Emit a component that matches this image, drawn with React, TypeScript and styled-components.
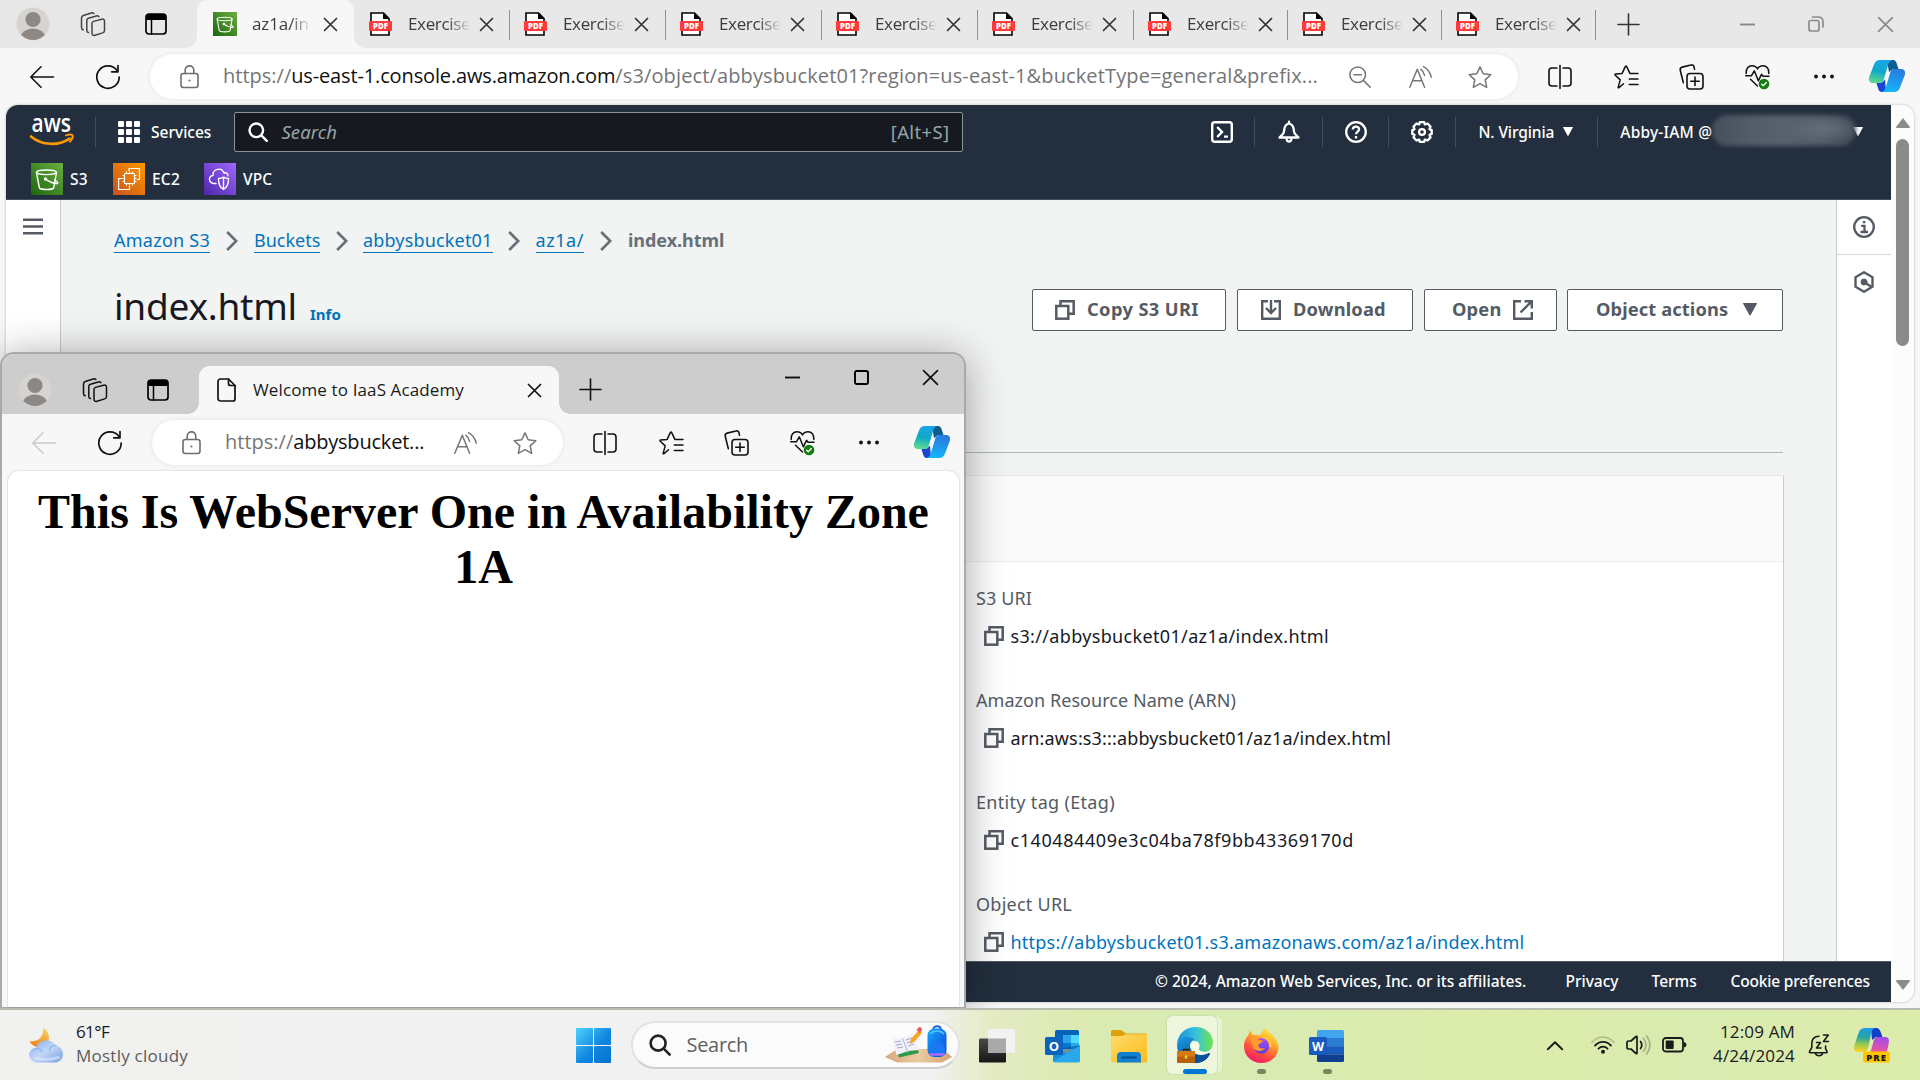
import React from "react";
import styled, { createGlobalStyle, css } from "styled-components";

const segoe = `"Open Sans", "Noto Sans", sans-serif`;
const ember = `"Noto Sans", "Open Sans", sans-serif`;

const Global = createGlobalStyle`
  *, *::before, *::after { box-sizing: border-box; }
  body { margin: 0; width: 1920px; height: 1080px; overflow: hidden; background: #f7f7f7; }
  svg { display: block; flex: none; overflow: visible; }
`;

/* ---------- shared ---------- */
const row = css`
  display: flex;
  align-items: center;
`;
type Spaced = { $ls?: number };
const spaced = css<Spaced>`
  white-space: nowrap;
  letter-spacing: ${(p) => p.$ls ?? 0}px;
`;
const Slot = styled.div<{ $w: number }>`
  ${row};
  justify-content: center;
  flex: none;
  width: ${(p) => p.$w}px;
  height: 100%;
`;

/* ---------- icons ---------- */
type Ic = { c?: string; s?: number };
const line = (c: string, w: number) => ({ fill: "none", stroke: c, strokeWidth: w, strokeLinecap: "round" as const, strokeLinejoin: "round" as const });

const Avatar = () => (
  <svg width="34" height="34" viewBox="0 0 34 34">
    <clipPath id="av"><circle cx="17" cy="17" r="16" /></clipPath>
    <circle cx="17" cy="17" r="16.5" fill="#d6d4d1" />
    <g clipPath="url(#av)" fill="#8d8884"><circle cx="17" cy="12.5" r="7.6" /><ellipse cx="17" cy="31" rx="12.4" ry="9.4" /></g>
  </svg>
);
const Workspaces = ({ c = "#222" }: Ic) => (
  <svg width="26" height="26" viewBox="0 0 26 26" {...line(c, 1.5)}>
    <path d="M13.5 10.4 21.7 8.200c1.500-.4 2.800.4 2.800 2v9.300c0 1.200-.7 2-1.800 2.400l-7.700 2.400c-1.600.5-3-.4-3-2V12.500c0-1.100.5-1.800 1.500-2.100z" />
    <path d="M8.500 21.500c-1-.2-1.700-1-1.700-2.100V9.600c0-1.300.6-2 1.700-2.300l7.800-2.300c1-.3 1.900-.1 2.500.6" />
    <path d="M3.300 18.700c-1.200-.2-1.800-1-1.800-2.200V7c0-1.300.6-2.100 1.800-2.500l8-2.500c1-.3 1.900-.1 2.500.5" />
  </svg>
);
const TabActions = () => (
  <svg width="22" height="22" viewBox="0 0 22 22">
    <rect x="1" y="1" width="20" height="20" rx="3" {...line("#000", 1.7)} />
    <path d="M1 7V4a3 3 0 0 1 3-3h14a3 3 0 0 1 3 3v3z" fill="#000" />
    <path d="M6.500 7v14" {...line("#000", 1.5)} />
  </svg>
);
const Cross = ({ c = "#333", s = 13 }: Ic) => (
  <svg width={s} height={s} viewBox="0 0 13 13" {...line(c, (1.7 * 13) / s)}><path d="m.5.5 12 12m0-12-12 12" /></svg>
);
const Plus = ({ c = "#333", s = 21 }: Ic) => (
  <svg width={s} height={s} viewBox="0 0 21 21" {...line(c, 1.6)}><path d="M10.500 0v21M0 10.500h21" /></svg>
);
const Minimize = ({ c = "#888" }: Ic) => (
  <svg width="15" height="15" viewBox="0 0 15 15" {...line(c, 1.9)} strokeLinecap="butt"><path d="M0 7.500h15" /></svg>
);
const Restore = () => (
  <svg width="16" height="16" viewBox="0 0 16 16" {...line("#8a8a8a", 1.7)}>
    <rect x="1" y="4.500" width="10" height="10.500" rx="2" /><path d="M4.500 1H10c3 0 5 2 5 5v5" />
  </svg>
);
const Maximize = () => (
  <svg width="15" height="15" viewBox="0 0 15 15" {...line("#000", 1.9)}><rect x="1" y="1" width="13" height="13" rx="1.800" /></svg>
);
const Back = ({ c = "#111" }: Ic) => (
  <svg width="24" height="22" viewBox="0 0 24 22" {...line(c, 1.6)}><path d="M23.500 11H1M11 .8.8 11 11 21.200" /></svg>
);
const Refresh = () => (
  <svg width="24" height="24" viewBox="0 0 24 24" {...line("#111", 1.7)}><path d="M21 5.400A11.200 11.200 0 1 0 23.200 12" /><path d="M22 .6V6.800h-6.300" /></svg>
);
const Lock = () => (
  <svg width="19" height="24" viewBox="0 0 19 24" {...line("#6e6e6e", 1.6)}>
    <rect x="1" y="8.500" width="17" height="14" rx="2.400" /><path d="M5.200 8.500V5.200a4.300 4.300 0 0 1 8.600 0v3.300" /><circle cx="9.500" cy="15.500" r="1.100" fill="#6e6e6e" stroke="none" />
  </svg>
);
const ZoomOut = () => (
  <svg width="22" height="22" viewBox="0 0 22 22" {...line("#767676", 1.5)}><circle cx="8.700" cy="8.700" r="7.800" /><path d="m14.400 14.400 6.800 6.800M5 8.700h7.400" /></svg>
);
const ReadAloud = () => (
  <svg width="23" height="22" viewBox="0 0 23 22" {...line("#767676", 1.5)}>
    <path d="m.8 21.200 7.500-18 7.300 18M3.400 14.800h9.800" /><path d="M11.800 3.300c2 1.300 3.300 3.300 3.800 6M14.500.6c3.800 2 6.600 5.300 7.700 10.600" />
  </svg>
);
const Star = () => (
  <svg width="24" height="24" viewBox="0 0 24 24" {...line("#767676", 1.5)}>
    <path d="m12 1.300 3.200 6.900 7.600.9-5.600 5.200 1.500 7.500L12 18.100l-6.700 3.700 1.500-7.500L1.200 9.100l7.600-.9z" transform="translate(0 .6)" />
  </svg>
);
const Split = () => (
  <svg width="24" height="24" viewBox="0 0 24 24" {...line("#111", 1.6)}>
    <path d="M9 3H4a3 3 0 0 0-3 3v12a3 3 0 0 0 3 3h5M15 3h5a3 3 0 0 1 3 3v12a3 3 0 0 1-3 3h-5M12 .5v23" />
  </svg>
);
const Favorites = () => (
  <svg width="25" height="24" viewBox="0 0 25 24" {...line("#111", 1.5)}>
    <path d="M9.500 18.800 5 22.600c-.6.500-1 .2-.8-.5l2-7.200L1.300 10.300c-.6-.6-.4-1.100.4-1.200l6.400-.7L11.300 1.600c.4-.8 1-.8 1.400 0l3.200 6.800" />
    <path d="M16.500 8.400H24M15.300 14H24M15.300 19.500H24" />
  </svg>
);
const Collections = () => (
  <svg width="25" height="26" viewBox="0 0 25 26" {...line("#111", 1.6)}>
    <rect x="8" y="9.500" width="16" height="15.500" rx="3" /><path d="M16 13v8.500M11.700 17.300h8.600" />
    <path d="M4.300 18.600 1.300 6.500C.9 4.800 1.600 3.600 3.200 3.100L12 1c1.500-.4 2.700.3 3 1.800l.5 2.400" />
  </svg>
);
const Heart = () => (
  <svg width="26" height="26" viewBox="0 0 26 26">
    <g {...line("#111", 1.5)}>
      <path d="M1.200 9.500C.6 4.500 3.600 1.800 7 1.800c2.500 0 4.500 1.200 5.500 3.200 1-2 3-3.200 5.500-3.200 3.400 0 6.400 2.700 5.800 7.700" />
      <path d="M.7 11.800h5.600l3-5 4 10 3.200-6.500 1.500 2h6" /><path d="m5.500 15.300 7 6.700" />
    </g>
    <circle cx="19" cy="20" r="5.300" fill="#107c10" /><path d="m16.700 20.200 1.600 1.600 3-3.200" {...line("#fff", 1.4)} />
  </svg>
);
const Dots = () => (
  <svg width="20" height="5" viewBox="0 0 20 5" fill="#111"><circle cx="2" cy="2.500" r="1.900" /><circle cx="10" cy="2.500" r="1.900" /><circle cx="18" cy="2.500" r="1.900" /></svg>
);
const Copilot = () => (
  <svg width="36" height="32" viewBox="0 0 36 32">
    <defs>
      <linearGradient id="cpa" x1=".5" y1="0" x2=".3" y2="1"><stop offset="0" stopColor="#18a6e8" /><stop offset=".5" stopColor="#10a9c8" /><stop offset="1" stopColor="#5fdc8a" /></linearGradient>
      <linearGradient id="cpb" x1=".7" y1="0" x2=".4" y2="1"><stop offset="0" stopColor="#2a78dc" /><stop offset="1" stopColor="#12b6fb" /></linearGradient>
    </defs>
    <path d="M18 0h6c2.400 0 3.200 1.600 4 4.500L29.500 9H24l-4 3z" fill="#0b5c8f" />
    <path d="M17 32h-4c-2.400 0-3.200-1.400-4-4L7.300 22.500H13l3-3z" fill="#1a44d6" />
    <path d="M11 0h13c-3 0-4.300 2.500-5.200 6L15 18.500c-1 3.500-2 4.500-5 4.500H4c-3 0-4.800-2-3.800-6L5 4.500C6.200 1.200 8 0 11 0z" fill="url(#cpa)" />
    <path d="M25 32H12c3 0 4.300-2.500 5.200-6L21 13.500c1-3.500 2-4.500 5-4.500h6c3 0 4.800 2 3.800 6L31 27.500c-1.200 3.300-3 4.500-6 4.500z" fill="url(#cpb)" />
  </svg>
);
const Bucket = ({ s = 32 }: Ic) => (
  <svg width={s} height={s} viewBox="0 0 32 32">
    <defs><linearGradient id="s3g" x1="0" y1="1" x2="1" y2="0"><stop stopColor="#1b660f" /><stop offset="1" stopColor="#6cae3e" /></linearGradient></defs>
    <rect width="32" height="32" fill="url(#s3g)" />
    <g {...line("#fff", 1.4)}>
      <ellipse cx="15.500" cy="9.300" rx="10" ry="2.300" /><path d="M5.500 9.500 8.300 24.500c.5 2.700 14 2.700 14.500 0L25.500 9.500" /><path d="M14.500 16c3 2.500 10 5.300 12 4.500 1.300-.7-1.300-2.400-2.800-3.300" /><circle cx="14.500" cy="16" r="1" />
    </g>
  </svg>
);
const Ec2 = () => (
  <svg width="32" height="32" viewBox="0 0 32 32">
    <defs><linearGradient id="ecg" x1="0" y1="1" x2="1" y2="0"><stop stopColor="#c8511b" /><stop offset="1" stopColor="#ff9900" /></linearGradient></defs>
    <rect width="32" height="32" fill="url(#ecg)" />
    <g {...line("#fff", 1.200)} strokeLinecap="butt">
      <rect x="11.500" y="10.500" width="10" height="10" rx="1" />
      <path d="M13.500 8.500v2M16.500 8.500v2M19.500 8.500v2M13.500 20.500v2M16.500 20.500v2M19.500 20.500v2M9.500 12.500h2M9.500 15.500h2M9.500 18.500h2M21.500 12.500h2M21.500 15.500h2M21.500 18.500h2" />
      <path d="M9 15.500H5.600V26.500H16.500V23M16 8V5.500H26.500V16.500H24" />
    </g>
  </svg>
);
const Vpc = () => (
  <svg width="32" height="32" viewBox="0 0 32 32">
    <defs><linearGradient id="vpg" x1="0" y1="1" x2="1" y2="0"><stop stopColor="#4d27a8" /><stop offset="1" stopColor="#a166ff" /></linearGradient></defs>
    <rect width="32" height="32" fill="url(#vpg)" />
    <g {...line("#fff", 1.400)}>
      <path d="M12 20.500H9.500C4 19.500 4.500 13 9 12.500 8.500 6 17.500 3.500 20 10c2.300-1 4 .6 4 2.800" />
      <path d="M19.500 14.200c1.700 1 3.400 1.300 5 1.300 0 6-1.200 9-5 11-3.800-2-5-5-5-11 1.600 0 3.300-.3 5-1.300zM19.500 14.500v12" />
    </g>
  </svg>
);
const Pdf = () => (
  <svg width="23" height="24" viewBox="0 0 23 24">
    <path d="M2 1h12.500L20 6.500V23H2z" fill="#fff" stroke="#000" strokeWidth="1.600" /><path d="M14 1v6h6z" fill="#000" />
    <rect x="0" y="9" width="23" height="10" rx="1" fill="#ff3b3b" />
    <text x="11.500" y="16.900" textAnchor="middle" fontFamily="Open Sans, sans-serif" fontWeight="800" fontSize="7.800" fill="#fff">PDF</text>
  </svg>
);
const Page = () => (
  <svg width="19" height="24" viewBox="0 0 19 24" {...line("#111", 1.700)}><path d="M3.500 1h8L18 7.500V21a2 2 0 0 1-2 2H3.500a2.500 2.500 0 0 1-2.500-2V3.500A2.500 2.500 0 0 1 3.500 1z" /><path d="M11.500 1v4.500a2 2 0 0 0 2 2H18" /></svg>
);
const AwsLogo = () => (
  <svg width="44" height="30" viewBox="0 0 44 30">
    <text x="1.500" y="14.500" textLength="39.500" lengthAdjust="spacingAndGlyphs" fontFamily="Open Sans, sans-serif" fontWeight="600" fontSize="25" fill="#fff">aws</text>
    <g {...line("#f90", 2.600)}><path d="M1 19.500C12 28.800 29 29 39.500 21.600" /><path d="M36 18.400c3-1 6-.9 6.500-.2.600.9-.4 4-2.500 6.500" strokeWidth="1.900" /></g>
  </svg>
);
const Grid9 = () => (
  <svg width="22" height="22" viewBox="0 0 22 22" fill="#fff">
    {[0, 8, 16].map((y) => [0, 8, 16].map((x) => <rect key={`${x}-${y}`} x={x} y={y} width="6" height="6" rx="1.300" />))}
  </svg>
);
const Magnifier = ({ c = "#fff", s = 20 }: Ic) => (
  <svg width={s} height={s} viewBox="0 0 20 20" {...line(c, 2.400)}><circle cx="8.300" cy="8.300" r="6.800" /><path d="m13.300 13.300 5.500 5.500" /></svg>
);
const Shell = () => (
  <svg width="22" height="22" viewBox="0 0 22 22" {...line("#fff", 2.400)}><rect x="1.200" y="1.200" width="19.600" height="19.600" rx="2.500" /><path d="m6.200 6 4.800 5-4.800 5M13 15.600h4" strokeLinecap="butt" strokeLinejoin="miter" /></svg>
);
const Bell = () => (
  <svg width="22" height="22" viewBox="0 0 22 22" {...line("#fff", 2.300)}><path d="M11 2.500c-4 1-4.800 4-4.900 7.500C6 13 4 13.500 1.500 16.500h19C18 13.500 16 13 15.900 10 15.800 6.500 15 3.500 11 2.500zM11 .6v2M8.700 18.500c.5 2.700 4.100 2.700 4.600 0" /></svg>
);
const Help = () => (
  <svg width="22" height="22" viewBox="0 0 22 22" {...line("#fff", 2.300)}><circle cx="11" cy="11" r="9.800" /><path d="M7.800 8.500C8 4.500 14.200 4.800 14.100 8.500c-.1 2.100-3.100 2.300-3.100 4.800" strokeLinecap="butt" /><path d="M11 15v2.400" strokeLinecap="butt" /></svg>
);
const Gear = () => (
  <svg width="22" height="22" viewBox="0 0 22 22" {...line("#fff", 2.300)}>
    <path d="m8.800 1.200h4.400l.6 2.200 2.700-.9 3 3.100-1 2.500 2.200 1v3.800l-2.200 1 1 2.500-3 3.100-2.700-.9-.6 2.200H8.800l-.6-2.200-2.700.9-3-3.100 1-2.500-2.200-1V9.100l2.200-1-1-2.500 3-3.100 2.700.9z" /><circle cx="11" cy="11" r="2.900" />
  </svg>
);
const Caret = ({ c = "#fff", s = 10 }: Ic) => (
  <svg width={s} height={s * 0.9} viewBox="0 0 10 9" fill={c}><path d="M.3 0h9.400c.3 0 .4.300.2.600L5.500 8.600c-.2.400-.8.400-1 0L.1.600C-.1.300 0 0 .3 0z" /></svg>
);
const Menu = () => (
  <svg width="20" height="17" viewBox="0 0 20 17" stroke="#545b64" strokeWidth="2.600"><path d="M0 1.700h20M0 8.500h20M0 15.300h20" /></svg>
);
const Chevron = () => (
  <svg width="12" height="20" viewBox="0 0 12 20" fill="none" stroke="#687078" strokeWidth="2.600"><path d="m1.200 1 9 9-9 9" /></svg>
);
const Copy = () => (
  <svg width="20" height="20" viewBox="0 0 20 20" fill="none" stroke="#545b64" strokeWidth="2.500"><rect x="1.300" y="6" width="12" height="12.700" /><path d="M5.500 6V1.300h13.200v12.400H13" /></svg>
);
const Download = () => (
  <svg width="20" height="20" viewBox="0 0 20 20" fill="none" stroke="#545b64" strokeWidth="2.400"><path d="M7 1.200H1.200v17.600h17.600V1.200H13M10 0v13M5 8l5 5 5-5" /></svg>
);
const External = () => (
  <svg width="20" height="20" viewBox="0 0 20 20" fill="none" stroke="#545b64" strokeWidth="2.400"><path d="M8 1.200H1.200v17.600h17.600V12M11.500 1.200h7.300v7.300M18 2 7.500 12.500" /></svg>
);
const Info = () => (
  <svg width="22" height="22" viewBox="0 0 22 22" fill="none" stroke="#545b64" strokeWidth="2.300"><circle cx="11" cy="11" r="9.800" /><path d="M8.200 9.800H11.500V16M7.500 16h7.500M9.800 6.200h2.600" /></svg>
);
const Hexagon = () => (
  <svg width="20" height="22" viewBox="0 0 20 22" {...line("#545b64", 2.400)}><path d="m10 1.300 8.500 4.900v9.600L10 20.700l-8.500-4.900V6.200z" /><circle cx="10" cy="11" r="3" fill="#545b64" strokeWidth="1" /><path d="m10 11 7 4.500" /></svg>
);

/* ---------- browser chrome ---------- */
const Desktop = styled.div`
  position: relative;
  width: 1920px;
  height: 1080px;
  overflow: hidden;
  display: flex;
  flex-direction: column;
  background: #f7f7f7;
`;
const TabStrip = styled.div`
  display: flex;
  height: 48px;
  background: #e8e8e8;
`;
const Lead = styled.div<{ $pad: number; $w: number }>`
  ${row};
  width: ${(p) => p.$w}px;
  height: 48px;
  padding-left: ${(p) => p.$pad}px;
  flex: none;
`;
const ActiveTab = styled.div<{ $w: number }>`
  ${row};
  position: relative;
  flex: none;
  width: ${(p) => p.$w}px;
  height: 48px;
  padding-left: 16px;
  background: #f7f7f7;
  border-radius: 11px 11px 0 0;
  &::before, &::after {
    content: "";
    position: absolute;
    bottom: 0;
    width: 11px;
    height: 11px;
  }
  &::before { left: -11px; background: radial-gradient(circle at 0 0, transparent 10.5px, #f7f7f7 11px); }
  &::after { right: -11px; background: radial-gradient(circle at 100% 0, transparent 10.5px, #f7f7f7 11px); }
`;
const Tab = styled.div<{ $w: number }>`
  ${row};
  position: relative;
  flex: none;
  width: ${(p) => p.$w}px;
  height: 48px;
  padding-left: 15px;
  &::after {
    content: "";
    position: absolute;
    right: -1px;
    top: 10px;
    width: 1.500px;
    height: 30px;
    background: #8f8f8f;
  }
`;
const TabLabel = styled.span<Spaced & { $w: number; $l: number; $c?: string; $fade?: boolean }>`
  ${spaced};
  width: ${(p) => p.$w}px;
  margin-left: ${(p) => p.$l}px;
  overflow: hidden;
  font: 400 17px/28px ${segoe};
  color: ${(p) => p.$c ?? "#3c3c3c"};
  ${(p) => p.$fade && css`mask-image: linear-gradient(90deg, #000 65%, transparent 102%);`}
`;
const WindowButtons = styled.div`
  ${row};
  margin-left: auto;
  height: 100%;
`;
const Toolbar = styled.div<{ $l: number }>`
  ${row};
  height: 57px;
  flex: none;
  padding-left: ${(p) => p.$l}px;
  background: #f7f7f7;
`;
const Address = styled.div<{ $w: number }>`
  ${row};
  width: ${(p) => p.$w}px;
  height: 45px;
  flex: none;
  border-radius: 23px;
  background: #fff;
  box-shadow: 0 0 5px rgba(0, 0, 0, 0.09);
  padding-left: 29.500px;
`;
const Url = styled.div<{ $w: number }>`
  display: flex;
  flex: none;
  width: ${(p) => p.$w}px;
  margin-left: 24.500px;
  padding-bottom: 1px;
  font: 400 20px/30px ${segoe};
  color: #757575;
`;
const UrlPart = styled.span<Spaced & { $host?: boolean }>`
  ${spaced};
  color: ${(p) => (p.$host ? "#101010" : "#757575")};
`;
const Nudge = styled.div<{ $x?: number; $y?: number }>`
  padding-bottom: ${(p) => p.$y ?? 0}px;
  padding-left: ${(p) => p.$x ?? 0}px;
`;

/* ---------- console ---------- */
const PageArea = styled.div`
  display: flex;
  height: 897px;
  margin: 0 6px;
  border-radius: 12px;
  overflow: hidden;
  background: #fcfcfc;
  box-shadow: 0 0 3px rgba(0, 0, 0, 0.25);
`;
const Console = styled.div`
  display: flex;
  flex-direction: column;
  width: 1885px;
  font-family: ${ember};
  background: #f2f3f3;
`;
const Header = styled.header`
  height: 95px;
  background: #232f3e;
  border-bottom: 1px solid #414d5c;
`;
const NavRow = styled.div`
  ${row};
  height: 52px;
  padding: 1px 0 0 24px;
`;
const VLine = styled.div`
  width: 1px;
  height: 30px;
  flex: none;
  background: #414d5c;
`;
const NavText = styled.span<Spaced & { $l?: number }>`
  ${spaced};
  margin-left: ${(p) => p.$l ?? 0}px;
  font-weight: 500;
  font-size: 15.500px;
  line-height: 24px;
  color: #fff;
`;
const SearchBox = styled.div`
  ${row};
  width: 729px;
  height: 40px;
  padding: 0 13px;
  margin-left: 23px;
  border: 1px solid #879596;
  border-radius: 2px;
  background: #161a20;
`;
const SearchHint = styled.span<Spaced>`
  ${spaced};
  margin-left: 13px;
  font: italic 400 18.500px/26px ${ember};
  color: #95a5a6;
`;
const Shortcut = styled.span<Spaced>`
  ${spaced};
  margin-left: auto;
  font-size: 18.500px;
  line-height: 26px;
  color: #95a5a6;
`;
const Redacted = styled.div`
  width: 144px;
  height: 31px;
  flex: none;
  margin: -2px -3px 0 0;
  border-radius: 16px;
  background:
    radial-gradient(ellipse 40px 14px at 78% 45%, #666e79, transparent),
    linear-gradient(90deg, #454f5c, #555d69 30%, #59616d 50%, #525b67 75%, #3e4855);
  filter: blur(2px);
`;
const FavRow = styled.div`
  ${row};
  height: 42px;
  padding: 2px 0 0 25px;
`;
const Body = styled.div`
  display: flex;
  flex: 1;
  min-height: 0;
`;
const SideRail = styled.div`
  width: 55px;
  padding: 18px 0 0 17px;
  background: #fff;
  border-right: 1px solid #c4cbcd;
`;
const HelpRail = styled.div`
  width: 55px;
  background: #fff;
  border-left: 1px solid #c4cbcd;
`;
const RailItem = styled.div`
  ${row};
  justify-content: center;
  height: 55px;
  border-bottom: 1px solid #d5dbdb;
  &:last-child { border-bottom: 0; height: 53px; }
`;
const Content = styled.main`
  display: flex;
  flex-direction: column;
  width: 1775px;
  padding: 29px 53px 0;
  overflow: hidden;
`;
const Crumbs = styled.nav`
  ${row};
  height: 24px;
  font-size: 18px;
`;
const Crumb = styled.a<Spaced & { $w: number }>`
  ${spaced};
  width: ${(p) => p.$w}px;
  line-height: 23px;
  color: #0073bb;
  border-bottom: 1px solid #0073bb;
`;
const CrumbCurrent = styled.span<Spaced>`
  ${spaced};
  margin-left: 1px;
  line-height: 23px;
  padding-bottom: 1px;
  font-weight: 700;
  color: #687078;
`;
const TitleRow = styled.div`
  display: flex;
  height: 42px;
  margin-top: 36px;
`;
const TitleBox = styled.div`
  display: flex;
  align-items: baseline;
  margin-top: -8px;
  flex: 1;
`;
const Title = styled.h1<Spaced>`
  ${spaced};
  margin: 0;
  width: 196px;
  font-weight: 400;
  font-size: 37px;
  line-height: 50px;
  color: #16191f;
`;
const InfoLink = styled.a<Spaced>`
  ${spaced};
  font-weight: 700;
  font-size: 15px;
  color: #0073bb;
`;
const Button = styled.button<{ $w: number; $l: number; $p: number }>`
  ${row};
  width: ${(p) => p.$w}px;
  height: 42px;
  margin-left: ${(p) => p.$l}px;
  padding: 0 0 1px ${(p) => p.$p}px;
  border: 1px solid #545b64;
  border-radius: 2px;
  background: #fff;
`;
const ButtonText = styled.span<Spaced & { $l?: number; $w?: number }>`
  ${spaced};
  margin-left: ${(p) => p.$l ?? 0}px;
  width: ${(p) => (p.$w ? `${p.$w}px` : "auto")};
  text-align: left;
  font: 700 18.300px/24px ${ember};
  padding-bottom: 1px;
  color: #545b64;
`;
const Rule = styled.div`
  height: 1px;
  flex: none;
  margin: 121px 0 22px;
  background: #aab7b8;
`;
const Card = styled.section`
  flex: 1;
  margin-right: -1px;
  background: #fff;
  border: 1px solid #e3e7e7;
  border-right-color: #c9cfd0;
  border-bottom: 0;
`;
const CardHead = styled.div`
  height: 86px;
  background: #fafafa;
  border-bottom: 1px solid #eaeded;
`;
const Fields = styled.div`
  display: flex;
  flex-direction: column;
  gap: 39px;
  padding: 24px 0 0 861px;
`;
const Field = styled.div`
  display: flex;
  flex-direction: column;
  gap: 14px;
  padding-bottom: 1px;
`;
const FieldLabel = styled.span<Spaced>`
  ${spaced};
  font-size: 18px;
  line-height: 24px;
  color: #545b64;
`;
const FieldValue = styled.div`
  ${row};
  gap: 7px;
  height: 24px;
  padding-left: 7.500px;
`;
const ValueText = styled.span<Spaced & { $link?: boolean }>`
  ${spaced};
  font-size: 18px;
  line-height: 24px;
  color: ${(p) => (p.$link ? "#0073bb" : "#16191f")};
`;
const Footer = styled.footer`
  ${row};
  height: 41px;
  flex: none;
  padding: 0 0 2px 1149px;
  background: #232f3e;
  border-top: 1px solid #545b64;
`;
const FooterText = styled.span<Spaced & { $w: number }>`
  ${spaced};
  width: ${(p) => p.$w}px;
  flex: none;
  font-weight: 500;
  font-size: 15.500px;
  line-height: 24px;
  color: #fff;
`;
const Scrollbar = styled.div`
  display: flex;
  flex-direction: column;
  align-items: center;
  width: 23px;
  padding: 13px 0 12px;
`;
const Thumb = styled.div`
  width: 13px;
  height: 207px;
  margin: 11px 0 auto;
  border-radius: 7px;
  background: #8b8b8b;
`;

/* ---------- floating window ---------- */
const Popup = styled.div`
  position: absolute;
  left: 0;
  top: 352px;
  width: 966px;
  height: 657px;
  display: flex;
  flex-direction: column;
  border: 2px solid #a9a9a9;
  border-radius: 14px 14px 0 0;
  background: #f7f7f7;
  box-shadow: 0 4px 42px rgba(0, 0, 0, 0.36);
`;
const PopupTitle = styled.div`
  display: flex;
  height: 60px;
  padding-top: 12px;
  flex: none;
  border-radius: 12px 12px 0 0;
  background: #cdcdcd;
`;
const PopupButtons = styled.div`
  ${row};
  height: 46px;
  margin: -12px -1px 0 auto;
`;
const PopupPage = styled.div`
  flex: 1;
  margin: 0 5px 0 6px;
  border-radius: 11px 11px 0 0;
  background: #fff;
  box-shadow: 0 0 2px rgba(0, 0, 0, 0.25);
`;
const Heading = styled.h1`
  margin: 13px 11px 0;
  font: 700 48px/55px "Liberation Serif", "Times New Roman", serif;
  text-align: center;
  color: #000;
`;

/* ---------- taskbar ---------- */
const Taskbar = styled.div`
  ${row};
  position: relative;
  z-index: 2;
  height: 72px;
  flex: none;
  margin-top: 6px;
  border-top: 2px solid #b9bbae;
  background: linear-gradient(90deg, #f1f1f0 0, #f1f1f1 930px, #e4ebc4 990px, #dbeab0 1080px, #d8ebb4 1200px, #dcecaa 1500px, #d9ebb0 1700px, #dcecaa 1920px);
`;
const Stack = styled.div<{ $w: number; $l: number; $right?: boolean }>`
  display: flex;
  flex-direction: column;
  flex: none;
  align-items: ${(p) => (p.$right ? "flex-end" : "flex-start")};
  width: ${(p) => p.$w}px;
  margin-left: ${(p) => p.$l}px;
  padding-bottom: 2px;
`;
const TaskText = styled.span<Spaced & { $dim?: boolean }>`
  ${spaced};
  font: 400 17px/24.500px ${segoe};
  color: ${(p) => (p.$dim ? "#5c5c5c" : "#1a1a1a")};
`;
const TaskSearch = styled.div`
  ${row};
  width: 329px;
  height: 48px;
  flex: none;
  margin-left: 20px;
  padding: 0 6px 0 16px;
  border: 2px solid #e2e2e2;
  border-bottom-color: #cfcfcf;
  border-radius: 24px;
  background: #fbfbfb;
`;
const TaskSearchText = styled.span<Spaced>`
  ${spaced};
  margin: 0 auto 0 15.500px;
  font: 400 20px/28px ${segoe};
  color: #5f5f5f;
`;
const AppButton = styled.div<{ $w?: number }>`
  display: flex;
  flex-direction: column;
  align-items: center;
  justify-content: flex-end;
  width: ${(p) => p.$w ?? 66}px;
  height: 58px;
  flex: none;
`;
const EdgeButton = styled(AppButton)`
  width: 50px;
  margin: 0 11px 0 5px;
  padding-left: 6px;
  border-radius: 6px;
  background: rgba(255, 255, 255, 0.55);
  box-shadow: 0 0 0 1px rgba(200, 215, 160, 0.6), 6px 0 0 -1px rgba(255, 255, 255, 0.4);
`;
const Indicator = styled.div<{ $w: number; $c: string }>`
  width: ${(p) => p.$w}px;
  height: 5px;
  margin-top: 6px;
  border-radius: 3px;
  background: ${(p) => p.$c};
`;
const Gap = styled.div<{ $w: number }>`
  width: ${(p) => p.$w}px;
  flex: none;
`;

const Weather = () => (
  <svg width="36" height="36" viewBox="0 0 36 36">
    <defs>
      <linearGradient id="wm" x1=".7" y1="0" x2=".3" y2="1"><stop stopColor="#f9cf5c" /><stop offset="1" stopColor="#ee8420" /></linearGradient>
      <linearGradient id="wc" x1="0" y1="0" x2="1" y2="1"><stop stopColor="#7fa9ee" /><stop offset=".5" stopColor="#c3d8f8" /><stop offset="1" stopColor="#7099e0" /></linearGradient>
    </defs>
    <path d="M14.500.500c6 5 7.500 12 2.500 17-5 4.500-13.500 3-16.500-3.500 7 1 14-2 14-13.500z" fill="url(#wm)" />
    <path d="M8 35.500a7.500 7.500 0 0 1-.8-15 11 11 0 0 1 19.500-2A8.700 8.700 0 0 1 27.500 35.500z" fill="url(#wc)" />
    <path d="M4 23c4-3 8-1 9 2M20 24c1-4 4-6 7.500-5.500" fill="none" stroke="#8db1ee" strokeWidth="1.200" /><path d="M6 31c8 2 17 2 25-1" stroke="#dce9fc" strokeWidth="3" fill="none" opacity=".6" />
  </svg>
);
const Windows = () => (
  <svg width="35" height="35" viewBox="0 0 35 35">
    <defs><linearGradient id="wl" gradientUnits="userSpaceOnUse" x1="0" y1="0" x2="32" y2="32"><stop stopColor="#4fd3ff" /><stop offset=".6" stopColor="#1187e0" /><stop offset="1" stopColor="#0675d2" /></linearGradient></defs>
    <g fill="url(#wl)"><rect width="17" height="17" rx="1" /><rect x="18" width="17" height="17" rx="1" /><rect y="18" width="17" height="17" rx="1" /><rect x="18" y="18" width="17" height="17" rx="1" /></g>
  </svg>
);
const School = () => (
  <svg width="67" height="38" viewBox="0 0 67 38">
    <defs><linearGradient id="bp" x1="0" y1="0" x2="1" y2="1"><stop stopColor="#17a8ff" /><stop offset="1" stopColor="#0547d8" /></linearGradient><linearGradient id="bd" x1="0" y1="0" x2="1" y2="0"><stop stopColor="#d6a878" /><stop offset=".5" stopColor="#eccba4" /><stop offset="1" stopColor="#d2a070" /></linearGradient></defs>
    <path d="M12 23h46l9 8-10 5.500H12L0 31z" fill="url(#bd)" />
    <path d="m8 15 20-5 6 17-20 4.500z" fill="#2f9a4c" /><path d="m7 13 11-1 11-4 4.500 16-10 1-12 4z" fill="#f1f1fb" /><path d="m17.500 12 5.500 15" stroke="#b5b2d6" />
    <path d="m10 16 6-1M11 19l6-1M12 22l6-1M21 14l6-2M22 17l6-2M23 20l6-2" stroke="#aaa6cc" strokeWidth="1" />
    <path d="m25 18 1-5 8-9 3 3-8 9z" fill="#f5a623" /><path d="m31.500 4 2-2.500q2-1 3 .5t0 3L34.500 7z" fill="#ee5a5a" />
    <path d="M48 4c0-5 8-5 8 0" fill="none" stroke="#1763dc" strokeWidth="1.800" /><rect x="42.500" y="2.500" width="19" height="28.500" rx="7" fill="url(#bp)" /><path d="M45 8c4-4 10-4 14 0" stroke="#57c1ff" fill="none" strokeWidth="1.500" /><path d="M44 29V22q1-6 8-6t8 6v7z" fill="#1a78f5" /><path d="M44.500 28.500h15" stroke="#b36bff" strokeWidth="2.400" />
  </svg>
);
const TaskView = () => (
  <svg width="36" height="34" viewBox="0 0 36 34">
    <defs><linearGradient id="tv" x1="0" y1="0" x2="0" y2="1"><stop stopColor="#4a4a4a" /><stop offset="1" stopColor="#161616" /></linearGradient></defs>
    <rect y="9.500" width="27" height="24" rx="1.200" fill="url(#tv)" /><rect x="9" y="0" width="27" height="24" rx="1" fill="#f2f2f2" /><rect x="9" y="9.500" width="18" height="14.500" fill="#a9a9a9" />
  </svg>
);
const Outlook = () => (
  <svg width="36" height="33" viewBox="0 0 36 33">
    <rect x="10" y="0" width="24" height="18" rx="1.500" fill="#0364b8" /><path d="M26 5h8v8h-8z" fill="#50d9ff" /><path d="M18 5h8v8h-8z" fill="#28a8ea" /><path d="M18 13h8v6h-8z" fill="#0078d4" /><path d="M26 13h8v6h-8z" fill="#28a8ea" />
    <path d="M35 15 21 23.500 8 16v14.500A1.800 1.800 0 0 0 9.800 32.300h23.400a1.800 1.800 0 0 0 1.800-1.800z" fill="#1490df" /><path d="M35 15 21 23.500 18 22v-4l17-3z" fill="#0a4a8c" opacity=".55" /><path d="M35 16 8 31.500q.5.800 1.800.8h23.400a1.800 1.800 0 0 0 1.800-1.800z" fill="#2aa8ee" />
    <rect y="7" width="18" height="18" rx="1.600" fill="#0a64bd" />
    <text x="9" y="20.500" textAnchor="middle" fontFamily="Open Sans, sans-serif" fontWeight="700" fontSize="13" fill="#fff">O</text>
  </svg>
);
const Explorer = () => (
  <svg width="36" height="33" viewBox="0 0 36 33">
    <defs><linearGradient id="fx" x1="0" y1="0" x2="1" y2="1"><stop stopColor="#ffda6b" /><stop offset="1" stopColor="#fbbc1a" /></linearGradient></defs>
    <path d="M0 1.500A1.500 1.500 0 0 1 1.500 0H10l5 3.500h19.500A1.500 1.500 0 0 1 36 5v5H0z" fill="#dfa009" /><path d="M0 6h11l4-1.800h21V31a1.500 1.500 0 0 1-1.500 1.500h-33A1.500 1.500 0 0 1 0 31z" fill="url(#fx)" />
    <path d="M6 32.500V26a4 4 0 0 1 4-4h16a4 4 0 0 1 4 4v6.500z" fill="#1080d0" /><path d="M11 27.500h14" stroke="#0a4f8c" strokeWidth="1.800" strokeLinecap="round" />
  </svg>
);
const Edge = () => (
  <svg width="36" height="36" viewBox="0 0 36 36">
    <defs>
      <linearGradient id="e1" x1="0" y1=".4" x2="1" y2=".4"><stop stopColor="#1b8fd8" /><stop offset=".5" stopColor="#35bfe0" /><stop offset="1" stopColor="#6ce64a" /></linearGradient>
      <linearGradient id="e2" x1="0" y1="0" x2=".6" y2="1"><stop stopColor="#1b9de2" /><stop offset="1" stopColor="#0a4f9c" /></linearGradient>
    </defs>
    <path d="M0 17C1 6.500 9 0 18.500 0 29 0 36 7.500 36 15.500c0 6-4 9.500-9 9.500-4 0-6.500-1.500-5-3.500 1.700-2.500.5-7-4-7C11 10 2 11 0 17z" fill="url(#e1)" />
    <path d="M0 18C1 10 10 7 17.500 12.500 14 14 12.500 17 13 20c1 6 8 9 14 7.500 3-.7 5-1.500 6-1C31 32 25.500 36 18.500 36 8 36 0 28 0 18z" fill="url(#e2)" />
    <path d="M13 20c.5 7 8 9.500 14 7.500 3-.7 5-1.500 6-1C31 32 25.500 36 18.500 36z" fill="#0c4f9b" />
    <path d="M14 19c0-5.500 7.500-6.500 8-1.800.2 2-1.200 3-.8 4.300.9 3 6.800 4 12 3.300-3 2.800-8 3.400-12 2.400-4-1-7.200-4-7.200-8.200z" fill="#f4fbea" />
    <rect y="24" width="18" height="12" rx="1" fill="#b7600c" /><path d="M0 25a1 1 0 0 1 1-1h16a1 1 0 0 1 1 1v4.500H0z" fill="#d37a14" /><path d="M6.500 24v-1.500h5V24" fill="none" stroke="#3a2008" strokeWidth="1.400" /><rect x="7.800" y="28.500" width="2.400" height="3" fill="#ffd23a" />
  </svg>
);
const Firefox = () => (
  <svg width="35" height="35" viewBox="0 0 35 35">
    <defs>
      <linearGradient id="f1" x1=".8" y1="0" x2=".3" y2="1"><stop stopColor="#fff04a" /><stop offset=".35" stopColor="#ffae2c" /><stop offset=".65" stopColor="#ff5a36" /><stop offset="1" stopColor="#f0146a" /></linearGradient>
      <linearGradient id="f2" x1=".6" y1="0" x2=".4" y2="1"><stop stopColor="#a24bff" /><stop offset="1" stopColor="#5a3fd0" /></linearGradient>
    </defs>
    <path d="M22 0c1 4 7 6 10 11.500 1.500 2.500 2.500 5 2.500 8C34.500 28 27 35 17.500 35S0 28 0 18.500C0 13 2 10 4 7.500L6 2.500l3 4.500c3-.5 5-.5 7 .5 0 0 2-5 6-7.500z" fill="url(#f1)" />
    <circle cx="17.500" cy="18" r="7.800" fill="url(#f2)" /><path d="M6 11c4-2.500 7-1.500 9 1l4 .5c0 2-3 2.500-4.500 4C14 20 17 21.500 21 20c-2 4-9 4-11.500 0-1.500-3-2-6-3.500-9z" fill="#ff9a2c" />
    <path d="M19 9c4 0 8 4 7.500 10" fill="none" stroke="#ffc02e" strokeWidth="3" />
  </svg>
);
const Word = () => (
  <svg width="36" height="33" viewBox="0 0 36 33">
    <path d="M8 1.500A1.500 1.500 0 0 1 9.500 0h24A1.500 1.500 0 0 1 35 1.500V8H8z" fill="#41a5ee" /><path d="M8 8h27v8.200H8z" fill="#2b7cd3" /><path d="M8 16.200h27v8H8z" fill="#185abd" /><path d="M8 24.200h27v6.300a1.500 1.500 0 0 1-1.500 1.500h-24A1.500 1.500 0 0 1 8 30.500z" fill="#103f91" />
    <rect y="7" width="18" height="18" rx="1.600" fill="#185abd" />
    <text x="9" y="20.500" textAnchor="middle" fontFamily="Open Sans, sans-serif" fontWeight="700" fontSize="12.500" fill="#fff">W</text>
  </svg>
);
const Up = () => (<svg width="16" height="9" viewBox="0 0 16 9" {...line("#1a1a1a", 1.900)}><path d="m.8 8.300 7.200-7 7.200 7" /></svg>);
const Wifi = () => (
  <svg width="24" height="18" viewBox="0 0 24 18" {...line("#1a1a1a", 1.800)}>
    <path d="M1 6.500C7-.6 17-.6 23 6.500" stroke="#b3bf90" /><path d="M4 9.600c4.500-5 11.500-5 16 0M7.500 12.700c2.500-2.700 6.500-2.700 9 0" /><circle cx="12" cy="15.700" r="2" fill="#1a1a1a" stroke="none" />
  </svg>
);
const Speaker = () => (
  <svg width="25" height="20" viewBox="0 0 25 20" {...line("#1a1a1a", 1.700)}>
    <path d="M1 7.500A1.500 1.500 0 0 1 2.500 6H5l5-4.500c.5-.4 1-.2 1 .5v16c0 .7-.5.900-1 .500L5 14H2.500A1.500 1.500 0 0 1 1 12.500zM14.500 6.500c1.500 2 1.500 5 0 7" /><path d="M17.500 3.500c3 4 3 9 0 13M20.500 1c4.500 5.500 4.500 12.500 0 18" stroke="#a7b386" />
  </svg>
);
const Battery = () => (
  <svg width="25" height="16" viewBox="0 0 25 16"><rect x="1" y="1" width="20" height="13.500" rx="2.800" {...line("#1a1a1a", 1.800)} /><rect x="3.700" y="3.600" width="8" height="8.300" rx="1" fill="#1a1a1a" /><path d="M22 5q2.500.5 2.500 2.800T22 10.500z" fill="#1a1a1a" /></svg>
);
const Snooze = () => (
  <svg width="22" height="23" viewBox="0 0 22 23" {...line("#1a1a1a", 1.600)}>
    <path d="M11 2.200C6 2.200 3.800 5.500 3.800 9.500v4L1.500 17.700q-.3 1 .6 1h16.300q1 0 .6-1l-1.400-3V12" /><path d="M7.500 19.500c1 3 6 3 7 0M8.500 8.500h4L8.500 14h4.500M15.500 1h4.800l-4.800 6.500h5" />
  </svg>
);
const CopilotPre = () => (
  <svg width="36" height="35" viewBox="0 0 36 35">
    <defs>
      <linearGradient id="p1" x1=".5" y1="0" x2=".4" y2="1"><stop stopColor="#1d9bea" /><stop offset=".4" stopColor="#2aa5a0" /><stop offset=".7" stopColor="#9ccc4a" /><stop offset="1" stopColor="#ffd02a" /></linearGradient>
      <linearGradient id="p2" x1=".6" y1="0" x2=".4" y2="1"><stop stopColor="#a24be8" /><stop offset="1" stopColor="#ff5a86" /></linearGradient>
    </defs>
    <path d="M17 0h5c3 0 4.200 2 5 5l1.500 4H22l-4 3z" fill="#123fc8" />
    <path d="M11 0h11c-3 0-4.300 2.500-5 6l-2.500 12c-1 4-2 6-5 6H4c-3 0-4.700-2-3.800-6L4.500 5C5.500 1.500 8 0 11 0z" fill="url(#p1)" />
    <path d="M13 26c3 0 4-3 5-7l1.500-5.500c1-3.500 2-4.500 5-4.500H31c3 0 4.500 2 3.800 6L32 28H13z" fill="url(#p2)" />
    <rect x="9" y="23.500" width="27" height="11" rx="2.500" fill="#ffc400" />
    <text x="22.700" y="32.500" textAnchor="middle" letterSpacing="1" fontFamily="Open Sans, sans-serif" fontWeight="800" fontSize="9.500" fill="#1a1a1a">PRE</text>
  </svg>
);

const BrowserTools = () => (
  <>
    <Slot $w={66}><Nudge $x={1}><Split /></Nudge></Slot>
    <Slot $w={66}><Nudge $x={2}><Favorites /></Nudge></Slot>
    <Slot $w={66}><Nudge $x={1}><Collections /></Nudge></Slot>
    <Slot $w={66}><Nudge $x={2}><Heart /></Nudge></Slot>
    <Slot $w={66}><Nudge $x={2}><Dots /></Nudge></Slot>
    <Slot $w={61}><Nudge $x={1} $y={1}><Copilot /></Nudge></Slot>
  </>
);

const tabWidths = [155, 156, 156, 156, 156, 154, 154, 154];

const fields = [
  { label: "S3 URI", value: "s3://abbysbucket01/az1a/index.html", ll: 0.11, vl: 0.34 },
  { label: "Amazon Resource Name (ARN)", value: "arn:aws:s3:::abbysbucket01/az1a/index.html", ll: 0.05, vl: 0.147 },
  { label: "Entity tag (Etag)", value: "c140484409e3c04ba78f9bb43369170d", ll: 0.32, vl: 0.58 },
  { label: "Object URL", value: "https://abbysbucket01.s3.amazonaws.com/az1a/index.html", ll: 0.25, vl: 0.223, link: true },
];

export default function App() {
  return (
    <Desktop>
      <Global />
      <TabStrip>
        <Lead $w={197} $pad={16}>
          <Avatar /><Gap $w={30} /><Workspaces c="#444" /><Gap $w={39} /><TabActions />
        </Lead>
        <ActiveTab $w={157}>
          <Bucket s={24} />
          <TabLabel $ls={-0.1} $w={58} $l={15} $fade>az1a/in</TabLabel>
          <Gap $w={14} /><Cross />
        </ActiveTab>
        {tabWidths.map((w, i) => (
          <Tab key={i} $w={w}>
            <Pdf />
            <TabLabel $ls={-0.35} $w={61} $l={16} $fade>Exercise</TabLabel>
            <Gap $w={11} /><Cross />
          </Tab>
        ))}
        <Slot $w={66}><Plus /></Slot>
        <WindowButtons>
          <Slot $w={69}><Minimize /></Slot>
          <Slot $w={68}><Restore /></Slot>
          <Slot $w={70}><Cross c="#8a8a8a" s={15} /></Slot>
        </WindowButtons>
      </TabStrip>
      <Toolbar $l={9}>
        <Slot $w={66}><Back /></Slot>
        <Slot $w={66}><Refresh /></Slot>
        <Gap $w={9} />
        <Address $w={1368}>
          <Lock />
          <Url $w={1107}>
            <UrlPart>https://</UrlPart>
            <UrlPart $ls={-0.14} $host>us-east-1.console.aws.amazon.com</UrlPart>
            <UrlPart $ls={0.13}>/s3/object/abbysbucket01?region=us-east-1&amp;bucketType=general&amp;prefix...</UrlPart>
          </Url>
          <Slot $w={60}><ZoomOut /></Slot>
          <Slot $w={60}><ReadAloud /></Slot>
          <Slot $w={60}><Star /></Slot>
        </Address>
        <Gap $w={8} />
        <BrowserTools />
      </Toolbar>

      <PageArea>
        <Console>
          <Header>
            <NavRow>
              <AwsLogo />
              <Gap $w={21} /><VLine /><Gap $w={22} />
              <Grid9 />
              <NavText $l={11}>Services</NavText>
              <SearchBox>
                <Magnifier />
                <SearchHint $ls={0.1}>Search</SearchHint>
                <Shortcut $ls={0.35}>[Alt+S]</Shortcut>
              </SearchBox>
              <Gap $w={227} />
              <Slot $w={64}><Shell /></Slot><VLine />
              <Slot $w={67}><Bell /></Slot><VLine />
              <Slot $w={65}><Help /></Slot><VLine />
              <Slot $w={66}><Gear /></Slot><VLine />
              <NavText $ls={-0.09} $l={22}>N. Virginia</NavText>
              <Gap $w={9} /><Caret />
              <Gap $w={24} /><VLine />
              <NavText $ls={0.19} $l={22}>Abby-IAM @</NavText>
              <Redacted />
              <Caret />
            </NavRow>
            <FavRow>
              <Bucket /><NavText $ls={0.3} $l={7}>S3</NavText><Gap $w={25} />
              <Ec2 /><NavText $ls={0.2} $l={7}>EC2</NavText><Gap $w={24} />
              <Vpc /><NavText $ls={0.2} $l={7}>VPC</NavText>
            </FavRow>
          </Header>
          <Body>
            <SideRail><Menu /></SideRail>
            <Content>
              <Crumbs>
                <Crumb $ls={0.25} $w={96}>Amazon S3</Crumb><Slot $w={44}><Chevron /></Slot>
                <Crumb $w={66}>Buckets</Crumb><Slot $w={43}><Chevron /></Slot>
                <Crumb $ls={0.16} $w={129.5}>abbysbucket01</Crumb><Slot $w={43}><Chevron /></Slot>
                <Crumb $ls={0.55} $w={48.5}>az1a/</Crumb><Slot $w={43}><Chevron /></Slot>
                <CrumbCurrent $ls={-0.05}>index.html</CrumbCurrent>
              </Crumbs>
              <TitleRow>
                <TitleBox>
                  <Title $ls={-0.22}>index.html</Title>
                  <InfoLink>Info</InfoLink>
                </TitleBox>
                <Button $w={194} $l={0} $p={22}><Copy /><ButtonText $ls={0.37} $l={12}>Copy S3 URI</ButtonText></Button>
                <Button $w={176} $l={11} $p={23}><Download /><ButtonText $ls={0.18} $l={12}>Download</ButtonText></Button>
                <Button $w={133} $l={11} $p={27}><ButtonText $ls={0.15} $w={61}>Open</ButtonText><External /></Button>
                <Button $w={216} $l={10} $p={28}><ButtonText $ls={0.1} $w={147}>Object actions</ButtonText><Caret c="#545b64" s={14} /></Button>
              </TitleRow>
              <Rule />
              <Card>
                <CardHead />
                <Fields>
                  {fields.map((f) => (
                    <Field key={f.label}>
                      <FieldLabel $ls={f.ll}>{f.label}</FieldLabel>
                      <FieldValue><Copy /><ValueText $ls={f.vl} $link={f.link}>{f.value}</ValueText></FieldValue>
                    </Field>
                  ))}
                </Fields>
              </Card>
            </Content>
            <HelpRail>
              <RailItem><Info /></RailItem>
              <RailItem><Hexagon /></RailItem>
            </HelpRail>
          </Body>
          <Footer>
            <FooterText $w={410.5}>© 2024, Amazon Web Services, Inc. or its affiliates.</FooterText>
            <FooterText $w={86}>Privacy</FooterText>
            <FooterText $w={79}>Terms</FooterText>
            <FooterText $ls={-0.19} $w={140}>Cookie preferences</FooterText>
          </Footer>
        </Console>
        <Scrollbar>
          <svg width="14" height="10" viewBox="0 0 14 10" fill="#8b8b8b"><path d="M7 0 14 9q0 1-1 1H1Q0 10 0 9z" /></svg>
          <Thumb />
          <svg width="14" height="10" viewBox="0 0 14 10" fill="#8b8b8b"><path d="M7 10 14 1q0-1-1-1H1Q0 0 0 1z" /></svg>
        </Scrollbar>
      </PageArea>

      <Popup>
        <PopupTitle>
          <Lead $w={197} $pad={16}>
            <Avatar /><Gap $w={30} /><Workspaces c="#111" /><Gap $w={39} /><TabActions />
          </Lead>
          <ActiveTab $w={360}>
            <Gap $w={2} /><Page />
            <TabLabel $ls={0.12} $w={265} $l={17} $c="#1a1a1a">Welcome to IaaS Academy</TabLabel>
            <Gap $w={10} /><Cross c="#111" />
          </ActiveTab>
          <Slot $w={62}><Nudge $y={2}><Plus c="#111" /></Nudge></Slot>
          <PopupButtons>
            <Slot $w={69}><Minimize c="#111" /></Slot>
            <Slot $w={69}><Maximize /></Slot>
            <Slot $w={69}><Cross c="#111" s={15} /></Slot>
          </PopupButtons>
        </PopupTitle>
        <Toolbar $l={9}>
          <Slot $w={66}><Back c="#c9c9c9" /></Slot>
          <Slot $w={66}><Refresh /></Slot>
          <Gap $w={9} />
          <Address $w={411}>
            <Lock />
            <Url $w={210}>
              <UrlPart>https://</UrlPart>
              <UrlPart $ls={-0.2} $host>abbysbucket...</UrlPart>
            </Url>
            <Slot $w={60}><ReadAloud /></Slot>
            <Slot $w={60}><Star /></Slot>
          </Address>
          <Gap $w={8} />
          <BrowserTools />
        </Toolbar>
        <PopupPage>
          <Heading>This Is WebServer One in Availability Zone 1A</Heading>
        </PopupPage>
      </Popup>

      <Taskbar>
        <Gap $w={29} /><Weather />
        <Stack $w={150} $l={11}>
          <TaskText $ls={-0.6}>61°F</TaskText>
          <TaskText $ls={0.24} $dim>Mostly cloudy</TaskText>
        </Stack>
        <Gap $w={350} />
        <Windows />
        <TaskSearch>
          <Magnifier c="#222" s={22} />
          <TaskSearchText $ls={-0.3}>Search</TaskSearchText>
          <School />
        </TaskSearch>
        <Gap $w={4} />
        <AppButton><TaskView /><Indicator $w={9} $c="transparent" /></AppButton>
        <AppButton><Outlook /><Indicator $w={9} $c="transparent" /></AppButton>
        <AppButton><Explorer /><Indicator $w={9} $c="transparent" /></AppButton>
        <EdgeButton><Edge /><Indicator $w={24} $c="#0078d4" /></EdgeButton>
        <AppButton><Firefox /><Indicator $w={9} $c="#7d8560" /></AppButton>
        <AppButton><Word /><Indicator $w={9} $c="#7d8560" /></AppButton>
        <Gap $w={187} />
        <Up /><Gap $w={28} /><Wifi /><Gap $w={11} /><Speaker /><Gap $w={11} /><Battery />
        <Stack $w={102} $l={6} $right>
          <TaskText $ls={0.15}>12:09 AM</TaskText>
          <TaskText $ls={0.16}>4/24/2024</TaskText>
        </Stack>
        <Gap $w={13} /><Snooze /><Gap $w={24} /><CopilotPre />
      </Taskbar>
    </Desktop>
  );
}
